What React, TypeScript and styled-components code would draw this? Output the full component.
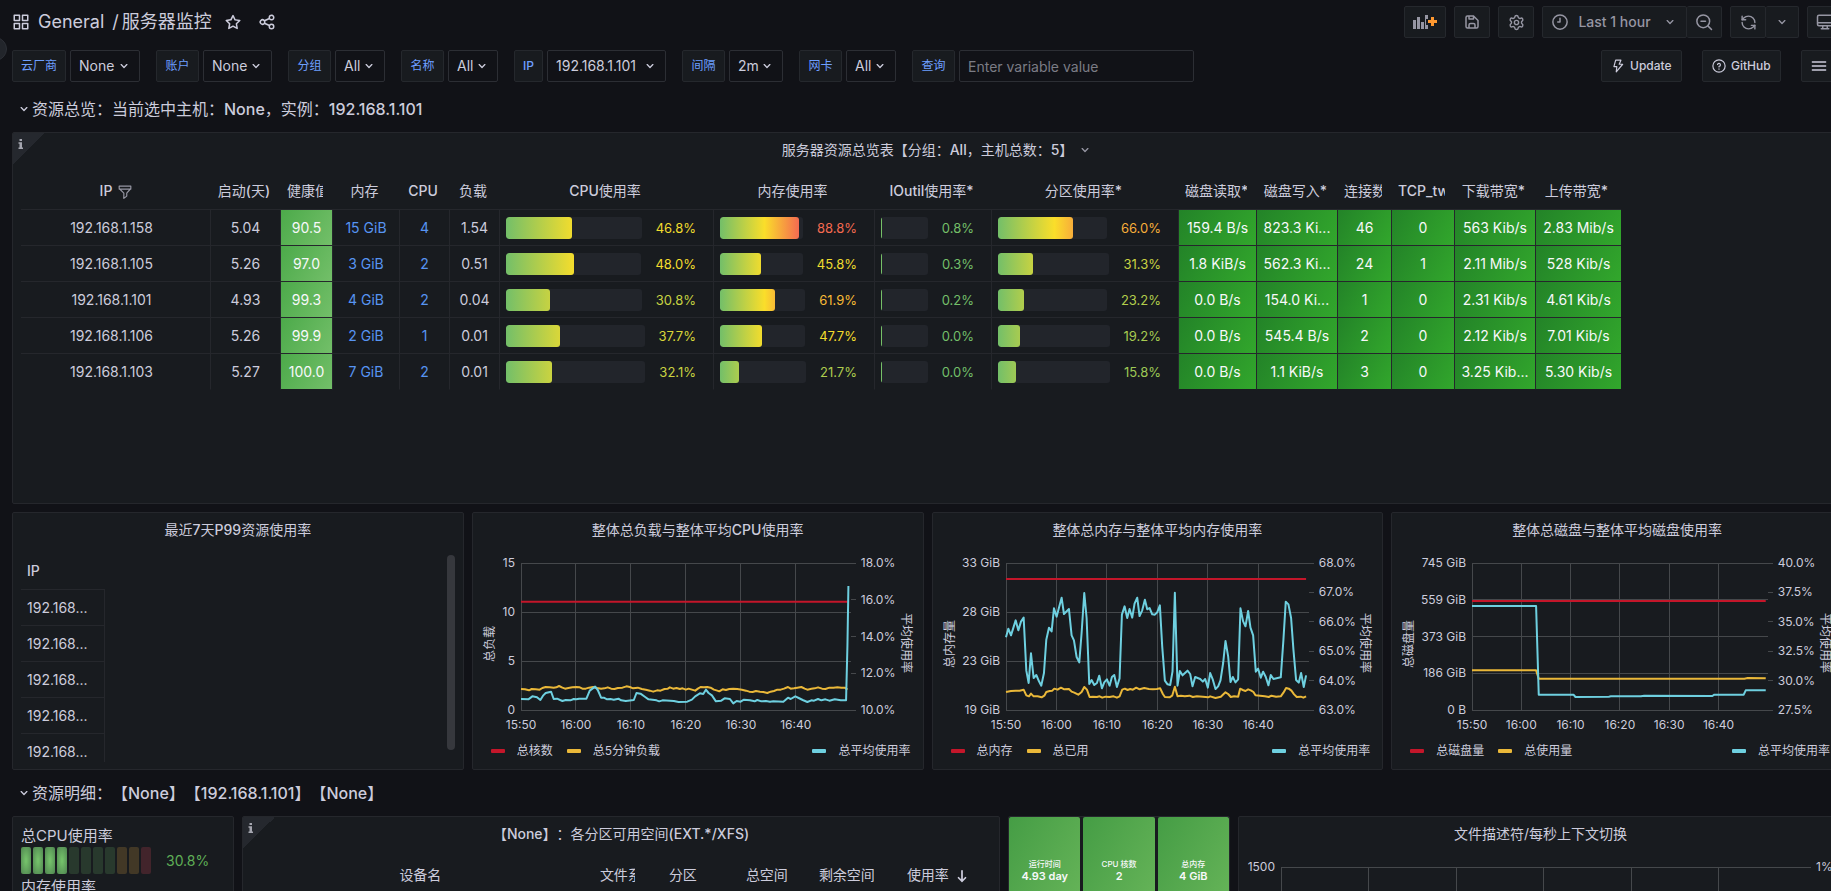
import React from 'react';
import styled, { createGlobalStyle, css } from 'styled-components';
import { RefreshCcw, Settings } from 'lucide-react';

const GlobalStyle = createGlobalStyle`
  *, *::before, *::after { box-sizing: border-box; }
  body {
    margin: 0;
    background: #111217;
    color: #ccccdc;
    font-family: Inter, "Noto Sans CJK SC", sans-serif;
    font-size: 14px;
    line-height: 22px;
    text-spacing-trim: space-all;
    overflow: hidden;
  }
  button, input, select { font: inherit; color: inherit; margin: 0; }
  h1, h2, h3, p { margin: 0; font-weight: 400; }
`;

/* ---------- icons ---------- */

const paths = {
  down: 'M17,9.17a1,1,0,0,0-1.41,0L12,12.71,8.46,9.17a1,1,0,0,0-1.41,0,1,1,0,0,0,0,1.42l4.24,4.24a1,1,0,0,0,1.42,0L17,10.59A1,1,0,0,0,17,9.17Z',
  apps: 'M10,13H3a1,1,0,0,0-1,1v7a1,1,0,0,0,1,1h7a1,1,0,0,0,1-1V14A1,1,0,0,0,10,13ZM9,20H4V15H9ZM21,2H14a1,1,0,0,0-1,1v7a1,1,0,0,0,1,1h7a1,1,0,0,0,1-1V3A1,1,0,0,0,21,2ZM20,9H15V4h5Zm1,4H14a1,1,0,0,0-1,1v7a1,1,0,0,0,1,1h7a1,1,0,0,0,1-1V14A1,1,0,0,0,21,13Zm-1,7H15V15h5ZM10,2H3A1,1,0,0,0,2,3v7a1,1,0,0,0,1,1h7a1,1,0,0,0,1-1V3A1,1,0,0,0,10,2ZM9,9H4V4H9Z',
  star: 'M22,9.67A1,1,0,0,0,21.14,9l-5.69-.83L12.9,3a1,1,0,0,0-1.8,0L8.55,8.16,2.86,9a1,1,0,0,0-.81.68,1,1,0,0,0,.25,1l4.13,4-1,5.68A1,1,0,0,0,6.9,21.44L12,18.77l5.1,2.67a.93.93,0,0,0,.46.12,1,1,0,0,0,.59-.19,1,1,0,0,0,.4-1l-1-5.68,4.13-4A1,1,0,0,0,22,9.67Zm-6.15,4a1,1,0,0,0-.29.88l.72,4.2-3.76-2a1.06,1.06,0,0,0-.94,0l-3.76,2,.72-4.2a1,1,0,0,0-.29-.88l-3-3,4.21-.61a1,1,0,0,0,.76-.55L12,5.7l1.88,3.82a1,1,0,0,0,.76.55l4.21.61Z',
  share: 'M18,14a4,4,0,0,0-3.08,1.48l-5.1-2.35a3.64,3.64,0,0,0,0-2.26l5.1-2.35A4,4,0,1,0,14,6a4.17,4.17,0,0,0,.07.71L8.79,9.14a4,4,0,1,0,0,5.72l5.28,2.43A4.17,4.17,0,0,0,14,18a4,4,0,1,0,4-4ZM18,4a2,2,0,1,1-2,2A2,2,0,0,1,18,4ZM6,14a2,2,0,1,1,2-2A2,2,0,0,1,6,14Zm12,6a2,2,0,1,1,2-2A2,2,0,0,1,18,20Z',
  save: 'm20.71 9.29-6-6a1 1 0 0 0-.32-.21A1.09 1.09 0 0 0 14 3H6a3 3 0 0 0-3 3v12a3 3 0 0 0 3 3h12a3 3 0 0 0 3-3v-8a1 1 0 0 0-.29-.71ZM9 5h4v2H9Zm6 14H9v-3a1 1 0 0 1 1-1h4a1 1 0 0 1 1 1Zm4-1a1 1 0 0 1-1 1h-1v-3a3 3 0 0 0-3-3h-4a3 3 0 0 0-3 3v3H6a1 1 0 0 1-1-1V6a1 1 0 0 1 1-1h1v3a1 1 0 0 0 1 1h6a1 1 0 0 0 1-1V6.41l4 4Z',
};

function Icon({ name, size = 16 }: { name: keyof typeof paths; size?: number }) {
  return (
    <svg width={size} height={size} viewBox="0 0 24 24" fill="currentColor" aria-hidden="true">
      <path d={paths[name]} />
    </svg>
  );
}

function LineIcon({ size = 16, width = 2, children }: { size?: number; width?: number; children: React.ReactNode }) {
  return (
    <svg
      width={size}
      height={size}
      viewBox="0 0 24 24"
      fill="none"
      stroke="currentColor"
      strokeWidth={width}
      strokeLinecap="round"
      strokeLinejoin="round"
      aria-hidden="true"
    >
      {children}
    </svg>
  );
}

/* ---------- headings mix a medium Latin face with regular Chinese ---------- */

const Latin = styled.span`
  font-weight: 500;
`;

function Heading({ text }: { text: string }) {
  return (
    <>
      {text.split(/([\x21-\x7e]+)/).map((part, i) => (i % 2 ? <Latin key={i}>{part}</Latin> : part))}
    </>
  );
}

/* ---------- page frame ---------- */

const Page = styled.div`
  position: relative;
  height: 100vh;
  overflow: auto;
  overflow-x: hidden;
  scrollbar-width: none;
`;

const Wide = styled.div`
  margin-right: -24px;
  padding: 6px 12px 0;
`;

const MenuHandle = styled.button`
  position: absolute;
  left: -17px;
  top: 37px;
  width: 24px;
  height: 24px;
  padding: 0;
  border: 1px solid #2c2f36;
  border-radius: 50%;
  background: #22252b;
`;

const Bar = styled.header`
  display: flex;
  align-items: center;
  justify-content: space-between;
  height: 32px;
`;

const Crumbs = styled.div`
  display: flex;
  align-items: center;
`;

const Title = styled.h1`
  margin: 0 12px 0 8px;
  font-size: 18px;
  line-height: 32px;
  white-space: nowrap;
  a { color: inherit; text-decoration: none; }
  span { margin: 0 3px 0 8px; }
`;

const BareButton = styled.button`
  display: flex;
  align-items: center;
  margin-right: 16px;
  padding: 0;
  border: 0;
  background: none;
`;

const Tools = styled.div<{ $gap: number }>`
  display: flex;
  gap: ${(p) => p.$gap}px;
`;

const Group = styled.div`
  display: flex;
  button + button { border-left: 0; }
`;

const ToolButton = styled.button<{ $w: number }>`
  display: flex;
  align-items: center;
  justify-content: center;
  width: ${(p) => p.$w}px;
  height: 32px;
  padding: 0;
  border: 1px solid #25282d;
  border-radius: 2px;
  background: #181b1f;
  color: #9696a3;
  font-weight: 500;
  white-space: nowrap;
  span { margin: 0 11px 0 9px; }
`;

const LinkButton = styled.a<{ $w: number }>`
  display: flex;
  align-items: center;
  gap: 5px;
  width: ${(p) => p.$w}px;
  height: 32px;
  padding: 0 9px;
  border: 1px solid #25282d;
  border-radius: 2px;
  background: #181b1f;
  color: #ccccdc;
  font-size: 12px;
  font-weight: 500;
  text-decoration: none;
`;

/* ---------- template variables ---------- */

const VarRow = styled.div`
  display: flex;
  justify-content: space-between;
  margin-top: 12px;
`;

const Vars = styled.div`
  display: flex;
  gap: 16px;
`;

const Var = styled.div`
  display: flex;
  gap: 4px;
`;

const VarLabel = styled.label<{ $w: number }>`
  width: ${(p) => p.$w}px;
  height: 32px;
  border: 1px solid #25282d;
  border-radius: 2px;
  background: #181b1f;
  color: #6e9fff;
  font-size: 12px;
  line-height: 30px;
  text-align: center;
  white-space: nowrap;
`;

const SelectBox = styled.div<{ $w: number }>`
  display: flex;
  align-items: center;
  width: ${(p) => p.$w}px;
  height: 32px;
  border: 1px solid #2c2e34;
  border-radius: 2px;
  svg { flex: none; margin-left: -23px; pointer-events: none; }
`;

const Select = styled.select`
  width: 100%;
  height: 30px;
  padding: 0 0 0 8px;
  border: 0;
  appearance: none;
  background: transparent;
  outline: 0;
`;

const TextBox = styled.input`
  width: 235px;
  height: 32px;
  padding: 0 8px;
  border: 1px solid #2c2e34;
  border-radius: 2px;
  background: #111217;
  outline: 0;
  &::placeholder { color: #7b7c85; opacity: 1; }
`;

const variables = [
  { id: 'vendor', label: '云厂商', labelWidth: 54, value: 'None', width: 70 },
  { id: 'account', label: '账户', labelWidth: 43, value: 'None', width: 69 },
  { id: 'group', label: '分组', labelWidth: 43, value: 'All', width: 50 },
  { id: 'name', label: '名称', labelWidth: 43, value: 'All', width: 50 },
  { id: 'ip', label: 'IP', labelWidth: 29, value: '192.168.1.101', width: 119 },
  { id: 'interval', label: '间隔', labelWidth: 43, value: '2m', width: 54 },
  { id: 'nic', label: '网卡', labelWidth: 43, value: 'All', width: 50 },
];

/* ---------- rows and panels ---------- */

const RowTitle = styled.h2`
  display: flex;
  align-items: center;
  height: 30px;
  margin: 12px 0 8px;
  padding-left: 4px;
  font-size: 16px;
  white-space: nowrap;
  svg { flex: none; }
`;

const Grid = styled.div`
  display: grid;
  grid-template-columns: repeat(24, minmax(0, 1fr));
  gap: 8px;
  & + h2 { margin-top: 8px; }
`;

const Panel = styled.section<{ $span: number; $h: number }>`
  position: relative;
  display: flex;
  flex-direction: column;
  grid-column: span ${(p) => p.$span};
  height: ${(p) => p.$h}px;
  border: 1px solid #25272c;
  border-radius: 2px;
  background: #181b1f;
  overflow: hidden;
`;

const PanelTitle = styled.h3`
  flex: none;
  height: 34px;
  font-size: 14px;
  line-height: 34px;
  text-align: center;
  white-space: nowrap;
  svg { margin: 0 -20px 0 4px; vertical-align: -3px; color: #9696a3; }
`;

const PanelBody = styled.div`
  flex: 1;
  min-height: 0;
  padding: 6px 8px 8px;
`;

const GaugeBody = styled(PanelBody)`
  padding-top: 8px;
`;

const Corner = styled.span`
  position: absolute;
  left: 0;
  top: 0;
  width: 32px;
  height: 32px;
  background: linear-gradient(135deg, #25282e 50%, transparent 50%);
  svg { display: block; margin: 6px 0 0 5px; }
`;

function InfoCorner() {
  return (
    <Corner>
      <svg width="6" height="10" viewBox="0 0 6 10" fill="#a5a6b0" aria-hidden="true">
        <path d="M1.5 0h2.5v2H1.5zM0.5 3.2h3.5v5.2h1V10H0.5V8.4h1V4.8h-1z" />
      </svg>
    </Corner>
  );
}

/* ---------- tables ---------- */

const Table = styled.table<{ $w: number }>`
  width: ${(p) => p.$w}px;
  table-layout: fixed;
  border-collapse: separate;
  border-spacing: 0;
`;

const Th = styled.th<{ $left?: boolean }>`
  height: 37px;
  padding: 0 10px 0 6px;
  border-bottom: 1px solid #25272c;
  font-weight: 400;
  text-align: ${(p) => (p.$left ? 'left' : 'center')};
  div { overflow: hidden; white-space: nowrap; }
  svg { margin: 0 -4px 0 6px; vertical-align: -3px; }
`;

const Td = styled.td<{ $kind?: string }>`
  height: 36px;
  padding: 0 6px;
  border-right: 1px solid #25272c;
  border-bottom: 1px solid #25272c;
  text-align: center;
  white-space: nowrap;
  tr:last-child & { border-bottom-color: transparent; background-clip: padding-box; }
  ${(p) => p.$kind === 'ip' && css`padding-right: 14px;`}
  ${(p) => p.$kind === 'left' && css`text-align: left;`}
  ${(p) => p.$kind === 'blue' && css`color: #5794f2;`}
  ${(p) => p.$kind === 'health' && css`
    color: #f7f8fa;
    background: linear-gradient(120deg, #4caa4a, #73bf69) padding-box;
  `}
  ${(p) => p.$kind === 'green' && css`
    color: #f7f8fa;
    background: linear-gradient(120deg, #238328, #32a72c) padding-box;
    &:last-child { border-right: 0; }
  `}
`;

const GaugeCell = styled.div`
  display: flex;
  align-items: center;
  gap: 14px;
  padding-right: 11px;
  font-size: 13px;
`;

const Track = styled.div`
  flex: 1;
  height: 22px;
  border-radius: 3px;
  background: #22252b;
  overflow: hidden;
`;

const Fill = styled.div<{ $full: number }>`
  height: 100%;
  min-width: 1px;
  border-radius: 3px;
  background: linear-gradient(90deg, #73bf69 0, #fade2a ${(p) => p.$full / 2}px, #f2495c ${(p) => p.$full}px);
`;

const stops = [[115, 191, 105], [250, 222, 42], [242, 73, 92]];

function scaleColor(value: number) {
  const i = value < 50 ? 0 : 1;
  const t = (value - i * 50) / 50;
  const mix = stops[i].map((c, k) => Math.round(c + (stops[i + 1][k] - c) * t));
  return `rgb(${mix.join(', ')})`;
}

function Gauge({ value, full }: { value: number; full: number }) {
  return (
    <GaugeCell style={{ color: scaleColor(value) }}>
      <Track>
        <Fill $full={full} style={{ width: Math.round((value * full) / 100) }} />
      </Track>
      {value.toFixed(1)}%
    </GaugeCell>
  );
}

const columns: [string, number][] = [
  ['IP', 190], ['启动(天)', 70], ['健康值', 52], ['内存', 67], ['CPU', 50], ['负载', 50],
  ['CPU使用率', 214], ['内存使用率', 161], ['IOutil使用率*', 117], ['分区使用率*', 187],
  ['磁盘读取*', 78], ['磁盘写入*', 81], ['连接数', 54], ['TCP_tw', 63], ['下载带宽*', 81], ['上传带宽*', 85],
];

const kinds = ['ip', '', 'health', 'blue', 'blue', '', 'g142', 'g89', 'g54', 'g113', 'green', 'green', 'green', 'green', 'green', 'green'];

const hosts: (string | number)[][] = [
  ['192.168.1.158', '5.04', '90.5', '15 GiB', '4', '1.54', 46.8, 88.8, 0.8, 66, '159.4 B/s', '823.3 Ki...', '46', '0', '563 Kib/s', '2.83 Mib/s'],
  ['192.168.1.105', '5.26', '97.0', '3 GiB', '2', '0.51', 48, 45.8, 0.3, 31.3, '1.8 KiB/s', '562.3 Ki...', '24', '1', '2.11 Mib/s', '528 Kib/s'],
  ['192.168.1.101', '4.93', '99.3', '4 GiB', '2', '0.04', 30.8, 61.9, 0.2, 23.2, '0.0 B/s', '154.0 Ki...', '1', '0', '2.31 Kib/s', '4.61 Kib/s'],
  ['192.168.1.106', '5.26', '99.9', '2 GiB', '1', '0.01', 37.7, 47.7, 0, 19.2, '0.0 B/s', '545.4 B/s', '2', '0', '2.12 Kib/s', '7.01 Kib/s'],
  ['192.168.1.103', '5.27', '100.0', '7 GiB', '2', '0.01', 32.1, 21.7, 0, 15.8, '0.0 B/s', '1.1 KiB/s', '3', '0', '3.25 Kib...', '5.30 Kib/s'],
];

function HostTable() {
  return (
    <Table $w={1600}>
      <colgroup>
        {columns.map(([name, width]) => <col key={name} width={width} />)}
      </colgroup>
      <thead>
        <tr>
          {columns.map(([name], i) => (
            <Th key={name}>
              <div>
                <Heading text={name} />
                {i === 0 && (
                  <LineIcon size={14} width={2}>
                    <path d="M2 2h20v4l-7 8v5l-5 4v-9L2 6zM2 7h20" opacity="0.7" />
                  </LineIcon>
                )}
              </div>
            </Th>
          ))}
        </tr>
      </thead>
      <tbody>
        {hosts.map((row) => (
          <tr key={row[0]}>
            {row.map((cell, i) => (
              <Td key={i} $kind={kinds[i]}>
                {typeof cell === 'number' ? <Gauge value={cell} full={Number(kinds[i].slice(1))} /> : cell}
              </Td>
            ))}
          </tr>
        ))}
      </tbody>
    </Table>
  );
}

const ScrollArea = styled.div`
  display: flex;
  justify-content: space-between;
  height: 209px;
  overflow: hidden;
`;

const Thumb = styled.div`
  width: 8px;
  height: 195px;
  margin-top: 2px;
  border-radius: 4px;
  background: #36383d;
`;

/* ---------- charts ---------- */

const ChartArea = styled.div`
  display: flex;
  align-items: center;
  height: 163px;
  margin-top: 8px;
`;

const AxisTitle = styled.span<{ $side: 'left' | 'right' }>`
  flex: none;
  width: 18px;
  height: 147px;
  margin-top: 14px;
  text-align: center;
  font-size: 12px;
  line-height: 18px;
  writing-mode: vertical-rl;
  text-orientation: sideways;
  ${(p) => (p.$side === 'left' ? css`margin-left: 8px; transform: rotate(180deg);` : css`margin-right: 8px;`)}
`;

const Plot = styled.svg<{ $left: number; $right: number }>`
  display: block;
  flex: 1;
  min-width: 0;
  height: 147px;
  margin: 0 ${(p) => p.$right}px 0 ${(p) => p.$left}px;
  overflow: visible;
  font-size: 12px;
  fill: #ccccdc;
  .grid { stroke: #45484b; stroke-width: 1; shape-rendering: crispEdges; }
  polyline { fill: none; stroke-width: 2; stroke-linejoin: round; vector-effect: non-scaling-stroke; }
`;

const Legend = styled.div`
  display: flex;
  gap: 14px;
  margin: 24px 12px 0 18px;
  font-size: 12px;
  line-height: 18px;
  white-space: nowrap;
  span:last-child { margin-left: auto; }
`;

const LegendItem = styled.span<{ $color: string }>`
  display: flex;
  align-items: center;
  gap: 12px;
  &::before {
    content: "";
    width: 14px;
    height: 4px;
    border-radius: 1px;
    background: ${(p) => p.$color};
  }
`;

const RED = '#c4162a';
const YELLOW = '#eab839';
const BLUE = '#6ed0e0';
const times = ['15:50', '16:00', '16:10', '16:20', '16:30', '16:40'];

interface ChartProps {
  title: string;
  axes: [string, string];
  left: string[];
  right: string[];
  margins: [number, number];
  box: string;
  names: string[];
  series: string[];
}

function Chart({ title, axes, left, right, margins, box, names, series }: ChartProps) {
  const colors = [RED, YELLOW, BLUE];
  return (
    <Panel $span={6} $h={258}>
      <PanelTitle><Heading text={title} /></PanelTitle>
      <ChartArea>
        <AxisTitle $side="left">{axes[0]}</AxisTitle>
        <Plot $left={margins[0]} $right={margins[1]} role="img" aria-label={title}>
          {left.map((label, i) => {
            const y = `${(i * 100) / (left.length - 1)}%`;
            return (
              <React.Fragment key={label}>
                <line className="grid" x1="0" x2="100%" y1={y} y2={y} />
                <text x="-6" y={y} dy="4" textAnchor="end">{label}</text>
              </React.Fragment>
            );
          })}
          {right.map((label, i) => {
            const y = `${(i * 100) / (right.length - 1)}%`;
            return (
              <svg key={label} x="100%" y={y} overflow="visible">
                <line className="grid" x1="0" x2="5" y1="0" y2="0" />
                <text x="10" dy="4">{label}</text>
              </svg>
            );
          })}
          {times.map((label, i) => {
            const x = `${(i * 100) / 6}%`;
            return (
              <React.Fragment key={label}>
                <line className="grid" x1={x} x2={x} y1="0" y2="100%" />
                <text x={x} y="100%" dy="19" textAnchor="middle">{label}</text>
              </React.Fragment>
            );
          })}
          <svg width="100%" height="100%" viewBox={box} preserveAspectRatio="none" overflow="visible">
            {series.map((points, i) => <polyline key={i} points={points} stroke={colors[i]} />)}
          </svg>
        </Plot>
        <AxisTitle $side="right">{axes[1]}</AxisTitle>
      </ChartArea>
      <Legend>
        {names.map((name, i) => <LegendItem key={name} $color={colors[i]}>{name}</LegendItem>)}
      </Legend>
    </Panel>
  );
}

const charts: ChartProps[] = [
  {
    title: '整体总负载与整体平均CPU使用率',
    axes: ['总负载', '平均使用率'],
    left: ['15', '10', '5', '0'],
    right: ['18.0%', '16.0%', '14.0%', '12.0%', '10.0%'],
    margins: [22, 46],
    box: '184 190 988 441',
    names: ['总核数', '总5分钟负载', '总平均使用率'],
    series: [
      '184,306 1162,306',
      '184,568 196,569 208,572 216,568 228,569 240,570 248,565 258,562 270,563 282,564 290,563 298,559 308,564 316,567 326,565 338,563 350,562 360,563 368,567 378,567 388,564 400,562 412,565 424,567 434,566 444,563 454,567 464,568 474,565 488,564 500,560 510,562 520,566 534,564 546,568 558,570 570,573 580,576 592,572 602,573 614,568 624,567 630,563 640,567 650,565 660,568 668,566 678,570 686,567 696,570 706,573 714,567 722,562 732,563 742,562 752,564 762,570 772,573 778,575 788,569 798,571 808,568 820,567 832,568 846,570 858,573 868,576 878,577 888,574 900,576 910,577 922,580 932,576 942,574 952,570 962,570 972,567 984,562 992,567 1002,566 1012,564 1024,562 1034,567 1042,570 1054,567 1064,566 1074,563 1086,567 1096,568 1108,564 1120,564 1132,563 1144,564 1154,564 1162,570',
      '184,598 206,599 218,590 232,593 242,601 250,588 258,580 274,576 282,598 292,597 308,604 318,601 332,602 342,598 350,599 358,597 380,597 390,573 406,561 414,571 424,594 432,594 442,599 452,598 462,600 476,597 484,602 498,604 522,601 530,580 542,582 556,592 566,599 578,600 590,602 598,605 608,602 642,604 656,607 682,606 696,600 706,590 720,581 730,583 738,570 746,580 756,587 768,605 784,603 794,596 810,598 820,611 830,604 842,606 852,600 870,602 884,605 892,601 904,605 918,604 930,606 940,605 970,606 984,594 992,598 1006,590 1016,595 1028,601 1042,607 1054,602 1062,603 1074,598 1084,602 1096,599 1108,603 1124,599 1142,602 1158,602 1162,440 1165,259',
    ],
  },
  {
    title: '整体总内存与整体平均内存使用率',
    axes: ['总内存量', '平均使用率'],
    left: ['33 GiB', '28 GiB', '23 GiB', '19 GiB'],
    right: ['68.0%', '67.0%', '66.0%', '65.0%', '64.0%', '63.0%'],
    margins: [47, 48],
    box: '259 190 909 441',
    names: ['总内存', '总已用', '总平均使用率'],
    series: [
      '259,238 1160,238',
      '259,577 274,574 288,573 300,573 312,570 320,587 328,590 334,582 342,590 354,590 366,593 374,588 380,577 390,574 398,573 404,567 414,570 424,564 434,569 448,568 456,576 464,579 476,585 486,577 494,562 502,570 510,592 520,591 532,592 540,590 548,594 558,591 570,592 582,590 592,594 600,590 608,570 616,567 624,571 632,568 640,570 650,564 660,569 674,565 688,568 700,569 712,568 722,566 730,583 736,592 750,593 758,588 766,561 774,590 784,588 796,590 810,588 820,592 832,590 850,591 866,593 872,590 888,595 904,591 918,578 926,583 934,592 944,590 956,591 962,567 970,571 978,574 986,569 994,572 1002,577 1008,587 1022,588 1036,590 1048,592 1056,588 1070,591 1084,590 1092,579 1100,565 1108,567 1116,573 1124,584 1132,592 1144,591 1152,594 1160,590',
      '259,413 266,387 274,407 288,362 296,392 304,366 312,354 320,513 327,550 334,461 342,535 350,526 358,545 365,558 373,520 380,420 388,384 396,395 403,326 411,351 418,324 426,294 433,343 448,328 456,407 463,422 471,472 479,488 486,400 494,280 501,355 509,553 516,541 524,556 532,550 539,528 547,566 554,548 562,539 570,558 577,532 584,526 592,562 600,536 607,345 615,320 623,355 630,328 638,354 645,312 653,294 660,349 668,332 676,300 683,329 690,325 698,344 706,345 713,338 721,317 728,440 736,543 744,554 752,556 759,515 766,279 774,558 781,514 789,527 804,513 812,523 819,560 827,532 842,538 850,546 857,538 865,564 872,520 880,540 888,568 896,560 903,542 911,490 918,424 926,470 933,547 940,532 948,548 956,539 963,326 971,365 978,380 986,334 993,384 1001,407 1009,516 1016,507 1024,534 1031,516 1039,532 1047,557 1054,526 1062,538 1084,533 1092,420 1099,306 1107,314 1115,355 1122,450 1130,541 1138,549 1145,520 1153,562 1160,527',
    ],
  },
  {
    title: '整体总磁盘与整体平均磁盘使用率',
    axes: ['总磁盘量', '平均使用率'],
    left: ['745 GiB', '559 GiB', '373 GiB', '186 GiB', '0 B'],
    right: ['40.0%', '37.5%', '35.0%', '32.5%', '30.0%', '27.5%'],
    margins: [54, 48],
    box: '304 190 886 441',
    names: ['总磁盘量', '总使用量', '总平均使用率'],
    series: [
      '304,304 1184,304',
      '304,512 496,512 504,537 1120,537 1130,535 1184,536',
      '304,319 496,319 504,585 608,585 614,592 714,591 720,590 810,590 820,588 1024,589 1030,585 1118,585 1124,572 1184,572',
    ],
  },
];

/* ---------- detail row ---------- */

const GaugeTitle = styled.p`
  font-size: 15px;
  line-height: 22px;
`;

const LedRow = styled.div`
  display: flex;
  align-items: center;
  gap: 2px;
  height: 27px;
  margin-bottom: 2px;
  span { margin-left: 13px; color: #5fae56; }
`;

const Led = styled.i<{ $bg: string }>`
  width: 10px;
  height: 27px;
  border-radius: 2px;
  background: ${(p) => p.$bg};
`;

const lit = 'radial-gradient(#73bf69 10%, #4f8450)';

function LedGauge({ title, on, value }: { title: string; on: number; value: string }) {
  return (
    <>
      <GaugeTitle>{title}</GaugeTitle>
      <LedRow>
        {Array.from({ length: 11 }, (_, i) => (
          <Led key={i} $bg={i < on ? lit : i < 8 ? '#28392d' : i < 10 ? '#423826' : '#42242b'} />
        ))}
        <span>{value}</span>
      </LedRow>
    </>
  );
}

const Stats = styled.div`
  display: grid;
  grid-template-columns: repeat(3, 1fr);
  gap: 3px;
`;

const Stat = styled.div`
  display: flex;
  flex-direction: column;
  align-items: center;
  justify-content: center;
  height: 106px;
  border-radius: 2px;
  background: linear-gradient(120deg, #459d45, #69b65a);
  color: #f7f8fa;
  font-size: 8px;
  font-weight: 500;
  line-height: 12px;
  b { font-size: 11px; font-weight: 600; }
`;

const diskColumns: [string, number][] = [
  ['设备名', 343], ['文件系统', 51], ['分区', 80], ['总空间', 88], ['剩余空间', 71], ['使用率', 108],
];

const p99Hosts = ['192.168...', '192.168...', '192.168...', '192.168...', '192.168...'];

export default function App() {
  return (
    <Page>
      <GlobalStyle />
      <MenuHandle aria-label="Open menu" />
      <Wide>
        <Bar>
          <Crumbs>
            <Icon name="apps" size={18} />
            <Title><a href="#general">General</a><span>/</span><a href="#dashboard">服务器监控</a></Title>
            <BareButton aria-label="Star"><Icon name="star" size={18} /></BareButton>
            <BareButton aria-label="Share"><Icon name="share" size={18} /></BareButton>
          </Crumbs>
          <Tools $gap={8}>
            <ToolButton $w={42} aria-label="Add panel">
              <svg width="24" height="16" viewBox="0 0 24 16" aria-hidden="true">
                <path fill="#9696a3" d="M0 6h3v9H0zM4 3h3v12H4zM8 8h3v7H8zM12 1h3v4h-2v6h2v4h-3z" />
                <path fill="#ff9830" d="M18 3h3v3h3v3h-3v3h-3V9h-3V6h3z" />
              </svg>
            </ToolButton>
            <ToolButton $w={36} aria-label="Save"><Icon name="save" size={18} /></ToolButton>
            <ToolButton $w={36} aria-label="Settings"><Settings size={17} strokeWidth={2} /></ToolButton>
            <Group>
              <ToolButton $w={145}>
                <LineIcon size={18}>
                  <circle cx="12" cy="12" r="9.5" />
                  <path d="M12 7v5H9" />
                </LineIcon>
                <span>Last 1 hour</span>
                <Icon name="down" size={16} />
              </ToolButton>
              <ToolButton $w={35} aria-label="Zoom out">
                <LineIcon size={18}>
                  <circle cx="11" cy="11" r="8.5" />
                  <path d="M17.500 17.500 22 22M8 11h6" />
                </LineIcon>
              </ToolButton>
            </Group>
            <Group>
              <ToolButton $w={36} aria-label="Refresh"><RefreshCcw size={17} /></ToolButton>
              <ToolButton $w={33} aria-label="Refresh interval"><Icon name="down" size={16} /></ToolButton>
            </Group>
            <ToolButton $w={36} aria-label="Cycle view mode">
              <LineIcon size={18}>
                <path d="M4 3h16a2 2 0 0 1 2 2v10a2 2 0 0 1-2 2H4a2 2 0 0 1-2-2V5a2 2 0 0 1 2-2zM2 13h20M9 17v4M15 17v4M7 21h10" />
              </LineIcon>
            </ToolButton>
          </Tools>
        </Bar>

        <VarRow>
          <Vars>
            {variables.map((v) => (
              <Var key={v.id}>
                <VarLabel $w={v.labelWidth} htmlFor={v.id}><Heading text={v.label} /></VarLabel>
                <SelectBox $w={v.width}>
                  <Select id={v.id}><option>{v.value}</option></Select>
                  <Icon name="down" size={16} />
                </SelectBox>
              </Var>
            ))}
            <Var>
              <VarLabel $w={43} htmlFor="query">查询</VarLabel>
              <TextBox id="query" placeholder="Enter variable value" />
            </Var>
          </Vars>
          <Tools $gap={20}>
            <LinkButton $w={81} href="#update">
              <LineIcon size={14}><path d="M8 2h9l-3 7h6L9 22l1-9H5z" /></LineIcon>
              Update
            </LinkButton>
            <LinkButton $w={79} href="#github">
              <LineIcon size={14}>
                <circle cx="12" cy="12" r="10.500" />
                <path d="M9.500 9.500a2.500 2.500 0 1 1 2.500 3v1M12 17v.5" />
              </LineIcon>
              GitHub
            </LinkButton>
            <LinkButton $w={42} href="#menu" aria-label="Dashboards">
              <LineIcon size={16}><path d="M2 6h20M2 12h20M2 18h20" /></LineIcon>
            </LinkButton>
          </Tools>
        </VarRow>

        <RowTitle>
          <Icon name="down" size={16} />
          <span><Heading text="资源总览：当前选中主机：None，实例：192.168.1.101" /></span>
        </RowTitle>
        <Grid>
          <Panel $span={24} $h={372}>
            <InfoCorner />
            <PanelTitle>
              <Heading text="服务器资源总览表【分组：All，主机总数：5】" />
              <Icon name="down" size={16} />
            </PanelTitle>
            <PanelBody><HostTable /></PanelBody>
          </Panel>

          <Panel $span={6} $h={258}>
            <PanelTitle><Heading text="最近7天P99资源使用率" /></PanelTitle>
            <PanelBody>
              <ScrollArea>
                <div>
                  <Table $w={84}>
                    <thead><tr><Th $left><Heading text="IP" /></Th></tr></thead>
                    <tbody>
                      {p99Hosts.map((ip, i) => <tr key={i}><Td $kind="left">{ip}</Td></tr>)}
                    </tbody>
                  </Table>
                </div>
                <Thumb />
              </ScrollArea>
            </PanelBody>
          </Panel>
          {charts.map((chart) => <Chart key={chart.title} {...chart} />)}
        </Grid>

        <RowTitle>
          <Icon name="down" size={16} />
          <span><Heading text="资源明细：【None】【192.168.1.101】【None】" /></span>
        </RowTitle>
        <Grid>
          <Panel $span={3} $h={218}>
            <GaugeBody>
              <LedGauge title="总CPU使用率" on={4} value="30.8%" />
              <LedGauge title="内存使用率" on={7} value="61.9%" />
            </GaugeBody>
          </Panel>

          <Panel $span={10} $h={218}>
            <InfoCorner />
            <PanelTitle><Heading text="【None】：各分区可用空间(EXT.*/XFS)" /></PanelTitle>
            <PanelBody>
              <Table $w={741}>
                <colgroup>
                  {diskColumns.map(([name, width]) => <col key={name} width={width} />)}
                </colgroup>
                <thead>
                  <tr>
                    {diskColumns.map(([name], i) => (
                      <Th key={name}>
                        <div>
                          {name}
                          {i === 5 && <LineIcon size={14} width={3}><path d="M12 3v18M6 15l6 6 6-6" /></LineIcon>}
                        </div>
                      </Th>
                    ))}
                  </tr>
                </thead>
              </Table>
            </PanelBody>
          </Panel>

          <Panel $span={3} $h={218}>
            <Stats>
              <Stat>运行时间<b>4.93 day</b></Stat>
              <Stat>CPU 核数<b>2</b></Stat>
              <Stat>总内存<b>4 GiB</b></Stat>
            </Stats>
          </Panel>

          <Panel $span={8} $h={218}>
            <PanelTitle>文件描述符/每秒上下文切换</PanelTitle>
            <ChartArea>
              <Plot $left={42} $right={36} role="img" aria-label="文件描述符/每秒上下文切换">
                <line className="grid" x1="0" x2="100%" y1="0" y2="0" />
                <text x="-6" dy="4" textAnchor="end">1500</text>
                <svg x="100%" overflow="visible">
                  <line className="grid" x1="0" x2="5" y1="0" y2="0" />
                  <text x="10" dy="4">1%</text>
                </svg>
                {times.map((time, i) => (
                  <line key={time} className="grid" x1={`${(i * 100) / 6}%`} x2={`${(i * 100) / 6}%`} y1="0" y2="100%" />
                ))}
              </Plot>
            </ChartArea>
          </Panel>
        </Grid>
      </Wide>
    </Page>
  );
}
